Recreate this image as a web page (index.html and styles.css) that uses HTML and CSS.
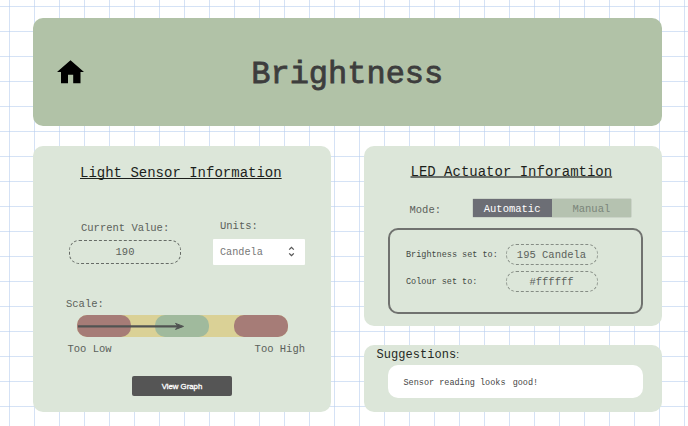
FILE: index.html
```html
<!DOCTYPE html>
<html lang="en">
<head>
<meta charset="utf-8">
<title>Brightness</title>
<link rel="stylesheet" href="styles.css">
</head>
<body>
<header class="header">
  <svg class="home" viewBox="0 0 27 24" width="27" height="24"><path d="M13.5 0.3L27 12H23.5V23.2H16.2V14.7H11V23.2H4V12H0Z"/></svg>
  <h1>Brightness</h1>
</header>
<main class="columns">
  <section class="card sensor">
    <h2>Light Sensor Information</h2>
    <div class="readings">
      <div class="current">
        <div class="label">Current Value:</div>
        <div class="pill">190</div>
      </div>
      <div class="units">
        <div class="label">Units:</div>
        <div class="select"><span>Candela</span>
          <svg viewBox="0 0 7 11" width="7" height="11"><path d="M1.2 3.6L3.5 1.3L5.8 3.6M1.2 7.4L3.5 9.7L5.8 7.4"/></svg>
        </div>
      </div>
    </div>
    <div class="label scale-label">Scale:</div>
    <div class="scale">
      <div class="zone bad"></div>
      <div class="zone good"></div>
      <div class="zone bad"></div>
      <svg class="arrow" viewBox="0 0 108 10" width="108" height="10"><path class="shaft" d="M1 5.4H101"/><path class="tip" d="M98.5 2.4L106.5 5.4L98.5 8.4L101 5.4Z"/></svg>
    </div>
    <div class="ends label"><span>Too Low</span><span>Too High</span></div>
    <button class="graph">View Graph</button>
  </section>
  <div class="side">
    <section class="card actuator">
      <h2>LED Actuator Inforamtion</h2>
      <div class="mode">
        <span class="label">Mode:</span>
        <div class="toggle"><span class="on">Automatic</span><span class="off">Manual</span></div>
      </div>
      <div class="settings">
        <div class="row"><span class="small">Brightness set to:</span><span class="pill">195 Candela</span></div>
        <div class="row"><span class="small">Colour set to:</span><span class="pill">#ffffff</span></div>
      </div>
    </section>
    <section class="card suggestions">
      <h3>Suggestions<span>:</span></h3>
      <div class="message">Sensor reading looks <span>good!</span></div>
    </section>
  </div>
</main>
</body>
</html>
```
FILE: styles.css
```css
* { box-sizing: border-box; }
body {
  margin: 0;
  height: 426px;
  padding: 18px 26.5px 0 33px;
  overflow: hidden;
  font-family: "Liberation Mono", monospace;
  color: #5b615b;
  background-color: #fff;
  background-image:
    linear-gradient(90deg, rgba(185, 207, 239, .6) 1px, transparent 1px),
    linear-gradient(rgba(185, 207, 239, .6) 1px, transparent 1px);
  background-size: 25px 25px;
  background-position: 9px 0, 0 6px;
}
h1, h2, h3 { margin: 0; }
.header {
  height: 108.3px;
  display: grid;
  grid-template-columns: 51px 1fr 51px;
  align-items: center;
  border-radius: 10px;
  background: #b1c2a7;
}
.home { justify-self: end; margin-bottom: 1px; }
h1 {
  font-size: 32px;
  line-height: 36px;
  font-weight: 400;
  -webkit-text-stroke: .8px #3d3d3d;
  text-align: center;
  color: #3d3d3d;
  margin-top: 6px;
}
.columns {
  display: grid;
  grid-template-columns: 298px 297.5px;
  justify-content: space-between;
  margin-top: 19.7px;
}
.card { background: #dce6d9; border-radius: 10px; }
.sensor { height: 266.3px; padding: 0 26px 0 33px; }
h2 {
  font-size: 14px;
  line-height: 16px;
  font-weight: 400;
  color: #1c1f1c;
  white-space: nowrap;
  text-decoration: underline;
  text-decoration-thickness: 1px;
  text-underline-offset: 1px;
  text-decoration-skip-ink: none;
}
.sensor h2 { padding: 19px 0 0 14px; }
.label { font-size: 10.5px; line-height: 12px; white-space: nowrap; }
.readings {
  display: flex;
  justify-content: space-between;
  margin: 39px 0 0 3px;
}
.current { width: 112px; padding-top: 2px; }
.current .label { padding-left: 12px; }
.pill {
  display: flex;
  align-items: center;
  justify-content: center;
  border: 1px dashed #666b66;
  border-radius: 10px;
  font-size: 10.5px;
}
.current .pill { height: 24px; margin-top: 6px; }
.units { width: 92px; }
.units .label { padding-left: 7px; }
.select {
  height: 26px;
  margin-top: 7px;
  padding: 0 10px 0 7px;
  display: flex;
  align-items: center;
  justify-content: space-between;
  background: #fff;
  border-radius: 1px;
  font-size: 10.2px;
  color: #777;
}
.select span { padding-top: 2px; }
.select svg { fill: none; stroke: #555; stroke-width: 1.3; }
.scale-label { margin-top: 33px; }
.scale {
  position: relative;
  width: 211.5px;
  height: 22px;
  margin: 5px 0 0 10.5px;
  display: flex;
  justify-content: space-between;
  border-radius: 10px;
  background: #dad196;
}
.zone { width: 54px; border-radius: 10px; }
.bad { background: #a67c77; }
.good { background: #a0ba9d; }
.arrow { position: absolute; left: 0; top: 6px; }
.shaft { stroke: #505352; stroke-width: 2.2; }
.tip { fill: #505352; stroke: #505352; stroke-width: 1; }
.ends {
  display: flex;
  justify-content: space-between;
  margin-top: 6px;
  padding-left: 1.5px;
}
.graph {
  display: block;
  width: 100px;
  height: 20px;
  margin: 21px 0 0 66px;
  padding: 1px 0 0;
  border: 0;
  border-radius: 2px;
  background: #555;
  color: #fff;
  font: 400 7.8px "Liberation Sans", sans-serif;
  -webkit-text-stroke: .3px #fff;
}
.side { display: flex; flex-direction: column; justify-content: space-between; }
.actuator { height: 179.7px; padding: 18px 18.5px 0 23.5px; }
.actuator h2 {
  padding-left: 23px;
  text-decoration-color: #6b716b;
  text-decoration-thickness: 2px;
  text-underline-offset: 0;
}
.mode {
  display: flex;
  justify-content: space-between;
  align-items: center;
  margin-top: 18px;
  padding: 0 11px 0 22px;
}
.mode .label { padding-top: 4px; }
.toggle {
  display: flex;
  width: 160.5px;
  height: 20px;
  border: 1px solid #cbd4c8;
  border-radius: 2px;
  font-size: 10.5px;
  line-height: 20px;
  text-align: center;
}
.toggle span { flex: 1; }
.on { background: #6c6e75; color: #fff; }
.off { background: #b5c2b0; color: #7b857a; }
.settings {
  height: 86px;
  margin-top: 10px;
  padding: 14px 43.5px 0 16.5px;
  border: 2px solid #70726f;
  border-radius: 10px;
}
.row {
  display: flex;
  justify-content: space-between;
  align-items: center;
  margin-bottom: 6px;
}
.row .pill { width: 92px; height: 21px; padding-top: 1px; border-color: #858c84; }
.small { padding-top: 2px; font-size: 8.5px; color: #434843; }
.suggestions { height: 67px; padding: 2px 18.5px 0 23.5px; }
h3 {
  margin-left: -11px;
  font-size: 12px;
  line-height: 16px;
  font-weight: 400;
  letter-spacing: .05px;
  color: #252925;
}
h3 span { font: 10px "Liberation Sans", sans-serif; }
.message {
  height: 33px;
  margin-top: 2px;
  padding-left: 16px;
  border-radius: 10px;
  background: #fff;
  font-size: 8.5px;
  line-height: 36px;
  color: #444;
}
.message span { margin-left: 2px; }
```
